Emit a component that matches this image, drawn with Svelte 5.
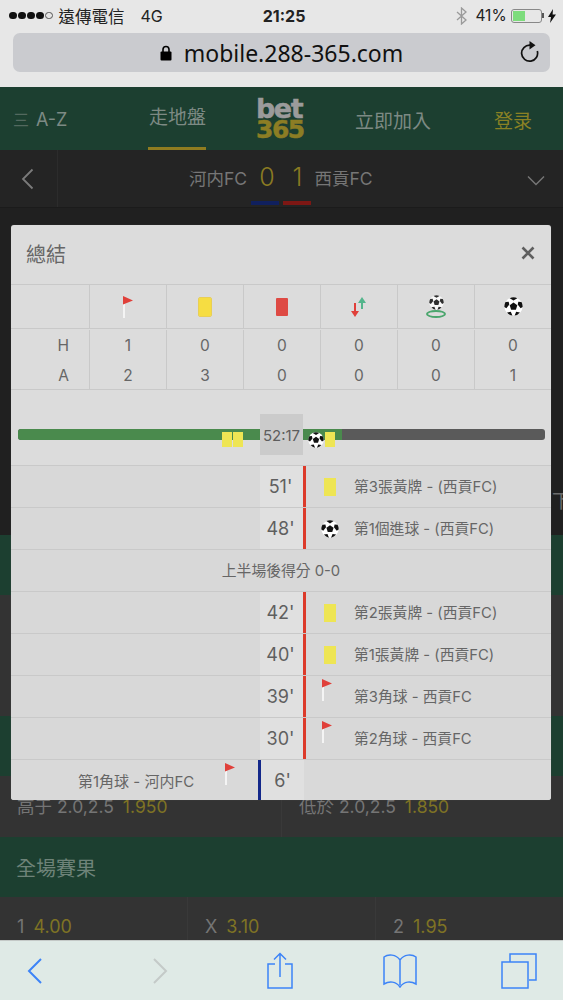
<script lang="ts">
  const heads = ["flag", "yellow", "red", "sub", "pen", "ball"];
  const stats = [
    { side: "H", vals: [1, 0, 0, 0, 0, 0] },
    { side: "A", vals: [2, 3, 0, 0, 0, 1] },
  ];
  const events = [
    { min: "51'", icon: "card", text: "第3張黃牌 - (西貢FC)" },
    { min: "48'", icon: "ball", text: "第1個進球 - (西貢FC)" },
    { note: "上半場後得分 0-0" },
    { min: "42'", icon: "card", text: "第2張黃牌 - (西貢FC)" },
    { min: "40'", icon: "card", text: "第1張黃牌 - (西貢FC)" },
    { min: "39'", icon: "flag", text: "第3角球 - 西貢FC" },
    { min: "30'", icon: "flag", text: "第2角球 - 西貢FC" },
    { min: "6'", icon: "flag", text: "第1角球 - 河内FC", home: true },
  ];
</script>

{#snippet ball(size)}
  <svg width={size} height={size} viewBox="0 0 20 20">
    <circle cx="10" cy="10" r="9.6" fill="#fff" />
    <path d="M10 5.800l4 2.900-1.500 4.700h-5L6 8.700z" fill="#111" />
    <path d="M6 1.200A9.600 9.600 0 0 1 14 1.200L10 3.800zM1.600 5.200 4.900 5l.7 3-3.100 3.900-2.100-1.400A9.600 9.600 0 0 1 1.600 5.200zM18.400 5.200 15.100 5l-.7 3 3.100 3.900 2.100-1.400a9.600 9.600 0 0 0-1.200-5.300zM3.200 16.200l4-.6 1.600 4A9.600 9.600 0 0 1 3.200 16.200zM16.800 16.200l-4-.6-1.600 4a9.600 9.600 0 0 0 5.600-3.400z" fill="#111" />
  </svg>
{/snippet}

{#snippet flag()}
  <svg width="12" height="22" viewBox="0 0 12 22">
    <rect x="1" y="8" width="2" height="14" fill="#f4f4f4" />
    <path d="M1 0l10 4.500-10 4z" fill="#e0403a" />
  </svg>
{/snippet}

<div class="page">
  <div class="chrome">
    <div class="status">
      <div class="signal">
        <i></i><i></i><i></i><i></i><i class="empty"></i>
      </div>
      <span class="carrier">遠傳電信</span>
      <span class="net">4G</span>
      <span class="clock">21:25</span>
      <svg class="bt" width="11" height="18" viewBox="0 0 11 18">
        <path d="M1 5l9 8-4.500 4V1L10 5l-9 8" fill="none" stroke="#9a9a9a" stroke-width="1.300" />
      </svg>
      <span class="pct">41%</span>
      <div class="battery"><div class="level"></div></div>
      <svg class="bolt" width="8" height="14" viewBox="0 0 8 14">
        <path d="M5 0 0 8h3l-1 6 6-8.500H4.600z" fill="#111" />
      </svg>
    </div>
    <div class="url">
      <svg class="lock" width="12" height="16" viewBox="0 0 12 16">
        <rect x="0.500" y="6.500" width="11" height="9" rx="1" fill="#000" />
        <path d="M3 7V4.500a3 3 0 0 1 6 0V7" fill="none" stroke="#000" stroke-width="1.600" />
      </svg>
      <span>mobile.288-365.com</span>
      <svg class="reload" width="20" height="22" viewBox="0 0 20 22">
        <path d="M11 4.200A8 8 0 1 0 18.300 10" fill="none" stroke="#111" stroke-width="1.700" />
        <path d="M10.500 0l6 4.200-6 4.200z" fill="#111" />
      </svg>
    </div>
  </div>

  <nav>
    <div class="az"><span class="burger">三</span>A-Z</div>
    <div class="live"><span>走地盤</span></div>
    <div class="logo"><b>bet</b><b class="num">365</b></div>
    <div class="join">立即加入</div>
    <div class="login">登录</div>
  </nav>

  <div class="match">
    <div class="back">
      <svg width="13" height="22" viewBox="0 0 13 22"><path d="M11.500 1.500 2 11l9.500 9.500" fill="none" stroke="#7b7b7b" stroke-width="1.800" /></svg>
    </div>
    <div class="score">
      <span class="team">河内FC</span>
      <span class="goal">0</span>
      <span class="goal second">1</span>
      <span class="team">西貢FC</span>
      <div class="strips"><i class="blue"></i><i class="redstrip"></i></div>
    </div>
    <svg class="more" width="18" height="11" viewBox="0 0 18 11"><path d="M1 1.500l8 8 8-8" fill="none" stroke="#777" stroke-width="1.400" /></svg>
  </div>

  <div class="behind dark"><span class="peek">下</span></div>
  <div class="behind green short"></div>
  <div class="behind grey tall"></div>
  <div class="behind green short"></div>
  <div class="behind grey odds two">
    <div>高于 2.0,2.5 <em>1.950</em></div>
    <div>低於 2.0,2.5 <em>1.850</em></div>
  </div>
  <div class="behind green short title">全場賽果</div>
  <div class="behind grey odds three">
    <div>1 <em>4.00</em></div>
    <div>X <em>3.10</em></div>
    <div>2 <em>1.95</em></div>
  </div>

  <div class="toolbar">
    <svg width="18" height="28" viewBox="0 0 18 28"><path d="M15 2 3 14l12 12" fill="none" stroke="#3d84f7" stroke-width="2" /></svg>
    <svg width="18" height="28" viewBox="0 0 18 28"><path d="M3 2l12 12L3 26" fill="none" stroke="#c4cac8" stroke-width="2" /></svg>
    <svg width="28" height="38" viewBox="0 0 28 38">
      <path d="M9 12H2v24h24V12h-7M14 25V2M8 7.500 14 1.500l6 6" fill="none" stroke="#3d84f7" stroke-width="1.500" />
    </svg>
    <svg width="36" height="36" viewBox="0 0 36 36">
      <path d="M18 7C14 1 6 1 2 4v27c5-3 12-3 16 3 4-6 11-6 16-3V4c-4-3-12-3-16 3zV32" fill="none" stroke="#3d84f7" stroke-width="1.500" />
    </svg>
    <svg width="36" height="36" viewBox="0 0 36 36">
      <path d="M9 9V1h26v26h-7" fill="none" stroke="#3d84f7" stroke-width="1.500" />
      <rect x="1" y="9" width="26" height="26" fill="none" stroke="#3d84f7" stroke-width="1.500" />
    </svg>
  </div>

  <div class="modal">
    <header>
      <h2>總結</h2>
      <svg width="14" height="14" viewBox="0 0 14 14"><path d="M1.500 1.500l11 11m0-11-11 11" stroke="#5f5f5f" stroke-width="2.600" /></svg>
    </header>

    <div class="tr icons">
      <div></div>
      {#each heads as h}
        <div class="cell">
          {#if h === "flag"}
            {@render flag()}
          {:else if h === "yellow"}
            <span class="hcard y"></span>
          {:else if h === "red"}
            <span class="hcard r"></span>
          {:else if h === "sub"}
            <svg width="16" height="20" viewBox="0 0 16 20">
              <path d="M7 6l4-6 4 6z" fill="#54b58c" />
              <rect x="10" y="5" width="2" height="7" fill="#54b58c" />
              <path d="M0 14l4 6 4-6z" fill="#e0403a" />
              <rect x="3" y="6" width="2" height="9" fill="#e0403a" />
            </svg>
          {:else if h === "pen"}
            <div class="pen">
              <div class="penball">{@render ball(15)}</div>
              <span class="spot"></span>
            </div>
          {:else}
            {@render ball(19)}
          {/if}
        </div>
      {/each}
    </div>

    <div class="counts">
      {#each stats as row}
        <div class="tr">
          <div class="side">{row.side}</div>
          {#each row.vals as v}
            <div class="cell">{v}</div>
          {/each}
        </div>
      {/each}
    </div>

    <div class="timeline">
      <div class="track"><div class="played"></div></div>
      <div class="clockbox">52:17</div>
      <span class="tcard" style="left: 211px"></span>
      <span class="tcard" style="left: 222px"></span>
      <span class="tball">{@render ball(16)}</span>
      <span class="tcard" style="left: 314px"></span>
    </div>

    {#each events as e}
      {#if e.note}
        <div class="ev note">{e.note}</div>
      {:else if e.home}
        <div class="ev home">
          <div class="left">
            <span class="ltext">{e.text}</span>
            <span class="micon flagged">{@render flag()}</span>
          </div>
          <div class="min">{e.min}</div>
        </div>
      {:else}
        <div class="ev away">
          <div class="left"></div>
          <div class="min">{e.min}</div>
          <div class="right">
            <span class="micon" class:flagged={e.icon === "flag"}>
              {#if e.icon === "card"}
                <span class="rowcard"></span>
              {:else if e.icon === "ball"}
                {@render ball(18)}
              {:else}
                {@render flag()}
              {/if}
            </span>
            <span class="rtext">{e.text}</span>
          </div>
        </div>
      {/if}
    {/each}
  </div>
</div>

<style>
  :global(body) {
    margin: 0;
  }

  .page {
    position: relative;
    display: flex;
    flex-direction: column;
    width: 563px;
    height: 1000px;
    overflow: hidden;
    background: #333;
    font-family: Inter, "Noto Sans CJK TC", sans-serif;
  }

  .chrome {
    height: 87px;
    padding-top: 1px;
    box-sizing: border-box;
    background: #e7e7e7;
  }

  .status {
    display: flex;
    align-items: center;
    position: relative;
    height: 29px;
    padding-left: 9px;
    font-size: 16.500px;
    color: #222;
  }

  .signal {
    display: flex;
    gap: 1.500px;
  }

  .signal i {
    width: 7.500px;
    height: 7.500px;
    border-radius: 50%;
    background: #111;
    box-sizing: border-box;
  }

  .signal i.empty {
    background: none;
    border: 1px solid #555;
  }

  .carrier {
    margin-left: 6px;
  }

  .net {
    margin-left: 16px;
    font-size: 16px;
  }

  .clock {
    margin-left: 100px;
    font-weight: 700;
    font-size: 16px;
  }

  .bt {
    margin-left: 151px;
  }

  .pct {
    margin-left: 8px;
    font-size: 15.500px;
  }

  .battery {
    position: relative;
    margin-left: 4px;
    width: 31px;
    height: 14px;
    border: 1px solid #888;
    border-radius: 3px;
    padding: 1px;
    box-sizing: border-box;
  }

  .battery::after {
    content: "";
    position: absolute;
    right: -3px;
    top: 3px;
    width: 1.500px;
    height: 5px;
    background: #555;
  }

  .level {
    width: 45%;
    height: 100%;
    background: #7ddc7c;
  }

  .bolt {
    margin-left: 6px;
  }

  .url {
    position: relative;
    display: flex;
    align-items: center;
    justify-content: center;
    gap: 12px;
    margin: 3px 13px 0;
    height: 39px;
    border-radius: 7px;
    background: #cacbcf;
    font-size: 23px;
    color: #111;
    font-family: "Noto Sans", sans-serif;
  }

  .lock {
    margin-top: 1px;
  }

  .reload {
    position: absolute;
    right: 11px;
    top: 8px;
  }

  nav {
    display: grid;
    grid-template-columns: 148px 108px 99px 139px 1fr;
    align-items: center;
    height: 63px;
    background: #1c3f30;
    font-size: 19px;
    color: #7d8a84;
  }

  .az {
    padding-left: 13px;
    font-size: 18px;
  }

  .burger {
    margin-right: 7px;
    font-size: 16px;
    color: #53695f;
  }

  .live {
    align-self: stretch;
    display: flex;
  }

  .live span {
    width: 58px;
    padding: 2px 0 0 1px;
    line-height: 58px;
    box-sizing: border-box;
    border-bottom: 4px solid #8f7c20;
  }

  .logo {
    display: flex;
    flex-direction: column;
    font-family: "DejaVu Sans", sans-serif;
    margin-top: -1px;
  }

  .logo b {
    font-weight: 700;
    font-size: 27px;
    line-height: 22px;
    height: 22px;
    color: #9b9b9b;
    letter-spacing: -1.500px;
    -webkit-text-stroke: 0.500px #9b9b9b;
  }

  .logo b.num {
    color: #8c7d24;
    font-size: 25px;
    line-height: 20px;
    height: 20px;
    letter-spacing: -1.500px;
    -webkit-text-stroke: 0.500px #8c7d24;
  }

  .login {
    color: #8a8124;
  }

  .match {
    position: relative;
    display: flex;
    align-items: center;
    height: 58px;
    flex: none;
    background: #242424;
    border-bottom: 1px solid #1b1b1b;
    box-sizing: border-box;
  }

  .back {
    display: flex;
    align-items: center;
    width: 58px;
    height: 100%;
    padding-left: 21px;
    box-sizing: border-box;
    border-right: 1px solid #2c2c2c;
  }

  .score {
    position: relative;
    display: flex;
    align-items: center;
    margin-left: 131px;
    height: 100%;
    padding-bottom: 3px;
    box-sizing: border-box;
    color: #767676;
    font-size: 17.500px;
  }

  .goal {
    margin-left: 12px;
    font-size: 25px;
    color: #8a7b22;
    font-weight: 300;
  }

  .goal.second {
    margin-left: 18px;
    margin-right: 12px;
  }

  .strips {
    position: absolute;
    left: 62px;
    bottom: 2px;
    display: flex;
    gap: 4px;
  }

  .strips i {
    width: 28px;
    height: 4px;
  }

  .blue {
    background: #10205e;
  }

  .redstrip {
    background: #7d1714;
  }

  .more {
    position: absolute;
    right: 18px;
    top: 25px;
  }

  .behind {
    flex: none;
    box-sizing: border-box;
  }

  .dark {
    height: 327px;
    background: #202020;
    overflow: hidden;
  }

  .peek {
    display: block;
    margin: 282px 0 0 552px;
    color: #6c6c6c;
    font-size: 19px;
    line-height: 24px;
  }

  .green {
    height: 60px;
    background: #1c3f30;
  }

  .grey {
    background: #333;
    color: #757575;
  }

  .tall {
    height: 121px;
  }

  .odds {
    display: grid;
    font-size: 17.500px;
  }

  .odds em {
    font-style: normal;
    color: #7f7324;
    margin-left: 4px;
  }

  .two {
    height: 61px;
    grid-template-columns: 281px 1fr;
  }

  .two div {
    padding: 17px 0 0 17px;
  }

  .two div + div {
    border-left: 1px solid #393939;
    padding-left: 17px;
  }

  .title {
    padding: 16px 0 0 16px;
    font-size: 20px;
    color: #6e8379;
  }

  .three {
    height: 43px;
    grid-template-columns: 187px 188px 1fr;
    font-size: 18px;
  }

  .three div {
    padding: 19px 0 0 17px;
  }

  .three div + div {
    border-left: 1px solid #393939;
  }

  .toolbar {
    position: absolute;
    left: 0;
    right: 0;
    bottom: 0;
    display: grid;
    grid-template-columns: 125px 120px 120px 119px 36px;
    align-items: center;
    height: 60px;
    padding-left: 17px;
    box-sizing: border-box;
    background: #dfeae6;
    border-top: 1px solid #c4c9c7;
  }

  .toolbar svg {
    width: 36px;
  }

  .modal {
    position: absolute;
    left: 11px;
    top: 225px;
    width: 540px;
    height: 575px;
    border-radius: 3px;
    background: #dcdcdc;
    color: #666;
    overflow: hidden;
    box-shadow: 0 0 1px #555;
  }

  header {
    display: flex;
    align-items: center;
    justify-content: space-between;
    height: 59px;
    padding: 0 16px 3px 15px;
    box-sizing: border-box;
  }

  h2 {
    margin: 0;
    font-size: 20px;
    font-weight: 400;
    color: #666;
  }

  .tr {
    display: grid;
    grid-template-columns: 78px repeat(5, 77px) 1fr;
  }

  .icons {
    height: 45px;
    border-top: 1px solid #c9c9c9;
    border-bottom: 1px solid #c9c9c9;
    box-sizing: border-box;
  }

  .icons > div + div,
  .counts .cell {
    border-left: 1px solid #c9c9c9;
  }

  .cell {
    display: flex;
    align-items: center;
    justify-content: center;
    font-size: 15.500px;
  }

  .counts {
    height: 61px;
    padding-top: 1px;
    border-bottom: 1px solid #c9c9c9;
    box-sizing: border-box;
  }

  .counts .tr {
    height: 30px;
  }

  .side {
    display: flex;
    align-items: center;
    justify-content: flex-end;
    padding-right: 20px;
    font-size: 15.500px;
  }

  .hcard {
    width: 12px;
    height: 18px;
    border-radius: 1px;
  }

  .hcard.y {
    background: #f6dd42;
    outline: 1px solid #e9cf55;
  }

  .hcard.r {
    background: #de4a44;
  }

  .pen {
    position: relative;
    width: 20px;
    height: 22px;
  }

  .penball {
    position: absolute;
    left: 3px;
    top: -1px;
    filter: blur(0.700px);
    opacity: 0.850;
  }

  .spot {
    position: absolute;
    left: 0;
    bottom: 0;
    width: 20px;
    height: 8px;
    border: 2px solid #4aa66d;
    border-radius: 50%;
    box-sizing: border-box;
  }

  .timeline {
    position: relative;
    height: 75px;
    box-sizing: border-box;
    padding: 39px 6px 0 7px;
  }

  .track {
    height: 11px;
    border-radius: 3px;
    background: #5a5a5a;
    overflow: hidden;
  }

  .played {
    width: 324px;
    height: 100%;
    background: #4a8a4d;
  }

  .clockbox {
    position: absolute;
    left: 249px;
    top: 24px;
    width: 43px;
    height: 41px;
    line-height: 43px;
    text-align: center;
    background: #cbcbcb;
    font-size: 15px;
    color: #5d5d5d;
  }

  .tcard {
    position: absolute;
    top: 42px;
    width: 10px;
    height: 15px;
    background: #eee554;
  }

  .tball {
    position: absolute;
    left: 297px;
    top: 42px;
    line-height: 0;
  }

  .ev {
    display: grid;
    grid-template-columns: 249px 43px 1fr;
    height: 42px;
    border-top: 1px solid #c9c9c9;
    box-sizing: border-box;
    background: #d8d8d8;
    font-size: 14.800px;
  }

  .min {
    display: flex;
    align-items: center;
    justify-content: center;
    font-size: 18px;
    color: #5f5f5f;
    background: #e0e0e0;
  }

  .away .min {
    padding-right: 2px;
    box-sizing: border-box;
  }

  .right {
    display: flex;
    align-items: center;
    border-left: 3px solid #dc3a2a;
    height: 100%;
  }

  .rtext {
    margin-top: -2px;
  }

  .micon {
    display: flex;
    justify-content: center;
    width: 47px;
    margin-right: 1px;
    line-height: 0;
  }

  .micon.flagged {
    align-self: flex-start;
    margin-top: 3px;
    padding-right: 5px;
    box-sizing: border-box;
  }

  .rowcard {
    width: 12px;
    height: 18px;
    background: #eee554;
  }

  .note {
    display: flex;
    align-items: center;
    justify-content: center;
    padding-bottom: 2px;
  }

  .home {
    grid-template-columns: 247px 46px 1fr;
    height: 41px;
    background: #d9d9d9;
    font-size: 15px;
  }

  .home .left {
    position: relative;
    display: flex;
    align-items: center;
  }

  .ltext {
    margin-left: 67px;
  }

  .home .micon {
    position: absolute;
    left: 198px;
    top: 0;
  }

  .home .min {
    border-left: 3px solid #13288a;
    box-sizing: border-box;
  }
</style>
